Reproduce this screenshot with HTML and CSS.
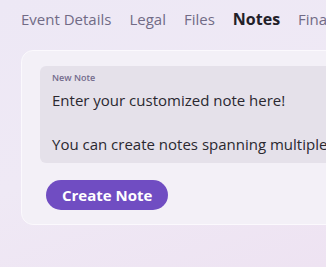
FILE: index.html
```html
<!DOCTYPE html>
<html>
<head>
<meta charset="utf-8">
<link rel="stylesheet" href="styles.css">
</head>
<body>
<div class="page">
  <nav class="tabs">
    <span class="tab">Event Details</span>
    <span class="tab">Legal</span>
    <span class="tab">Files</span>
    <span class="tab active">Notes</span>
    <span class="tab">Finances</span>
  </nav>
  <section class="card">
    <div class="field">
      <label class="label">New Note</label>
      <div class="text">Enter your customized note here!<br><br>You can create notes spanning multiple lines.</div>
    </div>
    <button class="btn">Create Note</button>
  </section>
</div>
</body>
</html>
```

FILE: styles.css
```css
html, body {
  margin: 0;
  padding: 0;
  height: 100%;
  overflow: hidden;
}
body {
  background: linear-gradient(160deg, #ede8f5 0%, #efe9f5 50%, #eee3f2 100%);
  font-family: "Open Sans", sans-serif;
}
.page {
  padding: 8px 0 0 21px;
  width: 600px;
}
.tabs {
  display: flex;
  align-items: baseline;
  gap: 18px;
  font-size: 15px;
  line-height: 22px;
  color: #716b86;
  white-space: nowrap;
}
.tab.active {
  color: #222028;
  font-weight: 700;
  font-size: 16px;
}
.card {
  margin-top: 20px;
  width: 500px;
  height: 175px;
  box-sizing: border-box;
  border: 1px solid #fbf9fd;
  border-radius: 12px;
  background: #f3f0f7;
  padding: 15px 18px;
}
.field {
  background: #e5e1ea;
  border-radius: 6px;
  height: 97px;
  box-sizing: border-box;
  padding: 5px 12px;
}
.label {
  display: block;
  font-size: 9px;
  line-height: 14px;
  color: #736b8c;
  font-weight: 600;
}
.text {
  font-size: 15px;
  line-height: 22px;
  color: #2a2830;
  white-space: nowrap;
  margin-top: 4px;
}
.btn {
  margin-top: 17px;
  margin-left: 6px;
  height: 30px;
  padding: 0 16px;
  border: none;
  border-radius: 15px;
  background: #704dc2;
  color: #fff;
  font-family: "Open Sans", sans-serif;
  font-weight: 700;
  font-size: 15px;
}
```
